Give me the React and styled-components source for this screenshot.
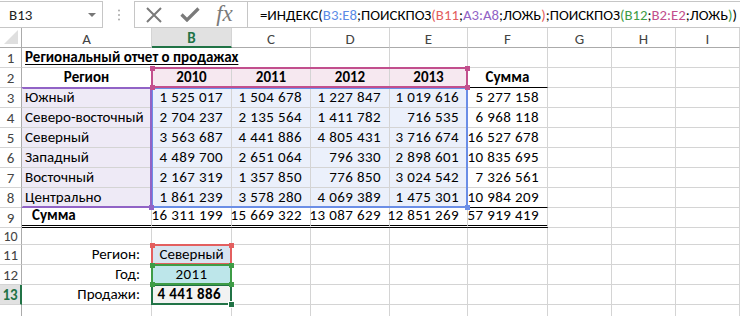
import React from 'react';
import styled, { createGlobalStyle } from 'styled-components';

const FONT = `Carlito, Calibri, "Open Sans", sans-serif`;

const GlobalStyle = createGlobalStyle`
  html, body {
    margin: 0;
    padding: 0;
    background: #fff;
  }
  body {
    width: 740px;
    height: 316px;
    overflow: hidden;
    font-family: ${FONT};
  }
`;

const Window = styled.div`
  display: flex;
  flex-direction: column;
  width: 740px;
  height: 316px;
  overflow: hidden;
`;

const FormulaBar = styled.div`
  display: flex;
  align-items: flex-start;
  height: 36px;
  padding-top: 1px;
  box-sizing: border-box;
`;

const NameBox = styled.div`
  width: 103px;
  height: 27px;
  box-sizing: border-box;
  border: 1px solid #c6c6c6;
  border-left: none;
  display: flex;
  align-items: center;
  justify-content: space-between;
  padding: 0 6px 0 9px;
  font-size: 15px;
  color: #222;
`;

const Arrow = styled.span`
  width: 0;
  height: 0;
  border-left: 4px solid transparent;
  border-right: 4px solid transparent;
  border-top: 4px solid #777;
`;

const Dots = styled.div`
  width: 31px;
  height: 27px;
  display: flex;
  align-items: center;
  justify-content: center;
`;

const FxButtons = styled.div`
  width: 113px;
  height: 27px;
  box-sizing: border-box;
  border: 1px solid #c6c6c6;
  border-right: none;
  display: flex;
  align-items: center;
  justify-content: space-around;
  padding: 0 6px 0 2px;
  color: #777;
`;

const FxLabel = styled.span`
  font-family: "Liberation Serif", serif;
  font-style: italic;
  font-size: 23px;
  color: #7a7a7a;
  line-height: 1;
  margin-top: -2px;
`;

const FormulaInput = styled.div`
  flex: 1;
  height: 27px;
  box-sizing: border-box;
  border: 1px solid #c6c6c6;
  border-right: none;
  display: flex;
  align-items: center;
  padding-left: 12px;
  font-size: 14.8px;
  color: #000;
  white-space: pre;
  overflow: hidden;
`;

const Ref = styled.span`
  color: ${p => p.$color};
`;

const Sheet = styled.div`
  display: grid;
  grid-template-columns: 22px 130px 80px 79px 79px 78px 80px 64px 64px 64px;
  grid-template-rows: 20px repeat(9, 20px) 17px repeat(4, 20px);
  font-size: 15px;
`;

const Corner = styled.div`
  grid-column: 1;
  grid-row: 1;
  border-right: 1px solid #ababab;
  border-bottom: 1px solid #ababab;
  position: relative;
  &::after {
    content: '';
    position: absolute;
    right: 3px;
    bottom: 3px;
    border-left: 14px solid transparent;
    border-bottom: 14px solid #dfdfdf;
  }
`;

const ColHead = styled.div`
  grid-column: ${p => p.$c};
  grid-row: 1;
  box-sizing: border-box;
  display: flex;
  align-items: center;
  justify-content: center;
  border-right: 1px solid #d4d4d4;
  border-bottom: ${p => (p.$active ? '2px solid #217346' : '1px solid #ababab')};
  background: ${p => (p.$active ? '#e1e1e1' : '#fff')};
  color: ${p => (p.$active ? '#217346' : '#444')};
  font-weight: ${p => (p.$active ? 700 : 400)};
  padding-top: 2px;
`;

const RowHead = styled.div`
  grid-column: 1;
  grid-row: ${p => p.$r};
  box-sizing: border-box;
  display: flex;
  align-items: center;
  justify-content: center;
  border-right: ${p => (p.$active ? '2px solid #217346' : '1px solid #ababab')};
  border-bottom: 1px solid #d4d4d4;
  background: ${p => (p.$active ? '#e1e1e1' : '#fff')};
  color: ${p => (p.$active ? '#217346' : '#444')};
  font-weight: ${p => (p.$active ? 700 : 400)};
  font-size: ${p => (p.$small ? '14px' : '15px')};
`;

const Cell = styled.div`
  grid-column: ${p => p.$c} / span ${p => p.$span || 1};
  grid-row: ${p => p.$r};
  box-sizing: border-box;
  display: flex;
  align-items: flex-end;
  justify-content: ${p => (p.$align === 'center' ? 'center' : p.$align === 'right' ? 'flex-end' : 'flex-start')};
  padding: 0 ${p => p.$pr ?? 3}px 1px ${p => p.$pl ?? 3}px;
  line-height: 18px;
  white-space: nowrap;
  border-right: 1px solid #d4d4d4;
  border-bottom: ${p => p.$bottom || '1px solid #d4d4d4'};
  background: ${p => p.$bg || '#fff'};
  font-weight: ${p => (p.$bold ? 700 : 400)};
  letter-spacing: ${p => (p.$num ? '0.4px' : 'normal')};
  color: #000;
`;

const Title = styled.span`
  font-weight: 700;
  text-decoration: underline;
  text-decoration-thickness: 1px;
  text-underline-offset: 2px;
`;

const Range = styled.div`
  grid-column: ${p => p.$c};
  grid-row: ${p => p.$r};
  position: relative;
  margin: -1px 0 0 -1px;
  border: 2px solid ${p => p.$color};
  ${p => p.$noLeft && 'border-left-color: transparent;'}
  pointer-events: none;
`;

const Handle = styled.span`
  position: absolute;
  width: 5px;
  height: 5px;
  background: ${p => p.$color};
  ${p => (p.$y === 't' ? 'top: -3.5px;' : 'bottom: -3.5px;')}
  ${p => (p.$x === 'l' ? 'left: -3.5px;' : 'right: -3.5px;')}
`;

const FillHandle = styled.span`
  position: absolute;
  right: -5px;
  bottom: -5px;
  width: 5px;
  height: 5px;
  background: #217346;
  border: 1px solid #fff;
`;

const COLS = ['A', 'B', 'C', 'D', 'E', 'F', 'G', 'H', 'I'];

const data = [
  ['Южный', '1 525 017', '1 504 678', '1 227 847', '1 019 616', '5 277 158'],
  ['Северо-восточный', '2 704 237', '2 135 564', '1 411 782', '716 535', '6 968 118'],
  ['Северный', '3 563 687', '4 441 886', '4 805 431', '3 716 674', '16 527 678'],
  ['Западный', '4 489 700', '2 651 064', '796 330', '2 898 601', '10 835 695'],
  ['Восточный', '2 167 319', '1 357 850', '776 850', '3 024 542', '7 326 561'],
  ['Центрально', '1 861 239', '3 578 280', '4 069 389', '1 475 301', '10 984 209'],
];

const totals = ['16 311 199', '15 669 322', '13 087 629', '12 851 269', '57 919 419'];

const C = {
  blue: '#6b8ee6',
  purple: '#9163c6',
  pink: '#c24f8d',
  red: '#e35f5f',
  green: '#3e9c46',
  sel: '#217346',
};

const buildCells = () => {
  const out = [];
  const add = (r, c, text = '', props = {}) =>
    out.push(
      <Cell key={`${r}-${c}`} $r={r + 1} $c={c + 2} {...props}>
        {text}
      </Cell>
    );
  const num = { $align: 'right', $pr: 8, $num: true };

  // row 1 - title overflows into B and C
  add(1, 0, <Title>Региональный отчет о продажах</Title>, { $span: 3 });
  for (let c = 3; c < 9; c++) add(1, c);

  // row 2 - headings
  add(2, 0, 'Регион', { $bold: true, $align: 'center' });
  ['2010', '2011', '2012', '2013'].forEach((y, i) =>
    add(2, i + 1, y, { $bold: true, $align: 'center', $bg: '#f6e8f0' })
  );
  add(2, 5, 'Сумма', { $bold: true, $align: 'center', $bottom: '1px solid #000' });
  for (let c = 6; c < 9; c++) add(2, c);

  // rows 3..8
  data.forEach((row, i) => {
    const r = i + 3;
    add(r, 0, row[0], { $bg: '#eeeaf6' });
    for (let c = 1; c < 5; c++) add(r, c, row[c], { ...num, $bg: '#ebf0fb' });
    add(r, 5, row[5], { ...num, $bottom: r === 8 ? '1px solid #000' : undefined });
    for (let c = 6; c < 9; c++) add(r, c);
  });

  // row 9 - totals
  const dbl = '3px double #000';
  add(9, 0, 'Сумма', { $bold: true, $pl: 10, $bottom: dbl });
  totals.forEach((t, i) => add(9, i + 1, t, { ...num, $bottom: dbl }));
  for (let c = 6; c < 9; c++) add(9, c);

  for (let c = 0; c < 9; c++) add(10, c);

  // lookup block
  add(11, 0, 'Регион:', { $align: 'right', $pr: 11 });
  add(11, 1, 'Северный', { $align: 'center', $bg: '#d7e4f0' });
  add(12, 0, 'Год:', { $align: 'right', $pr: 11 });
  add(12, 1, '2011', { $align: 'center', $bg: '#bde6ea', $num: true });
  add(13, 0, 'Продажи:', { $align: 'right', $pr: 11 });
  add(13, 1, '4 441 886', { ...num, $pr: 10, $bold: true, $bg: '#f2f2f2' });
  for (let r = 11; r < 14; r++) for (let c = 2; c < 9; c++) add(r, c);
  for (let c = 0; c < 9; c++) add(14, c);

  return out;
};

const corners = list => list.map(k => ({ y: k[0], x: k[1] }));

const ranges = [
  { key: 'b3e8', c: '3 / 7', r: '4 / 10', color: C.blue, handles: corners(['br']) },
  { key: 'a3a8', c: '2 / 3', r: '4 / 10', color: C.purple, noLeft: true, handles: corners(['br']) },
  { key: 'b2e2', c: '3 / 7', r: '3 / 4', color: C.pink, handles: corners(['tl', 'tr', 'bl', 'br']) },
  { key: 'b11', c: '3 / 4', r: '12 / 13', color: C.red, handles: corners(['tl', 'tr']) },
  { key: 'b13', c: '3 / 4', r: '14 / 15', color: C.sel, fill: true, handles: [] },
  { key: 'b12', c: '3 / 4', r: '13 / 14', color: C.green, handles: corners(['tl', 'tr', 'bl', 'br']) },
];

const XIcon = () => (
  <svg width="18" height="16" viewBox="0 0 18 16">
    <path d="M2 1 L16 15 M16 1 L2 15" stroke="#7a7a7a" strokeWidth="2" fill="none" />
  </svg>
);

const CheckIcon = () => (
  <svg width="20" height="15" viewBox="0 0 20 15">
    <path d="M1.5 7.5 L7 13 L18.5 1.5" stroke="#7a7a7a" strokeWidth="3.2" fill="none" />
  </svg>
);

const DotsIcon = () => (
  <svg width="4" height="12" viewBox="0 0 4 12">
    <circle cx="2" cy="1.5" r="1" fill="#aaa" />
    <circle cx="2" cy="6" r="1" fill="#aaa" />
    <circle cx="2" cy="10.5" r="1" fill="#aaa" />
  </svg>
);

const App = () => (
  <Window>
    <GlobalStyle />
    <FormulaBar>
      <NameBox>
        B13
        <Arrow />
      </NameBox>
      <Dots>
        <DotsIcon />
      </Dots>
      <FxButtons>
        <XIcon />
        <CheckIcon />
        <FxLabel>fx</FxLabel>
      </FxButtons>
      <FormulaInput>
        =ИНДЕКС(<Ref $color="#5b8be6">B3:E8</Ref>;ПОИСКПОЗ<Ref $color={C.red}>(</Ref>
        <Ref $color={C.red}>B11</Ref>;<Ref $color={C.purple}>A3:A8</Ref>;ЛОЖЬ
        <Ref $color={C.red}>)</Ref>;ПОИСКПОЗ<Ref $color={C.green}>(</Ref>
        <Ref $color={C.green}>B12</Ref>;<Ref $color={C.pink}>B2:E2</Ref>;ЛОЖЬ
        <Ref $color={C.green}>)</Ref>)
      </FormulaInput>
    </FormulaBar>

    <Sheet>
      <Corner />
      {COLS.map((l, i) => (
        <ColHead key={l} $c={i + 2} $active={l === 'B'}>
          {l}
        </ColHead>
      ))}
      {Array.from({ length: 14 }, (_, i) => (
        <RowHead key={i} $r={i + 2} $active={i + 1 === 13} $small={i + 1 === 10}>
          {i < 13 ? i + 1 : ''}
        </RowHead>
      ))}
      {buildCells()}
      {ranges.map(rg => (
        <Range key={rg.key} $c={rg.c} $r={rg.r} $color={rg.color} $noLeft={rg.noLeft}>
          {rg.handles.map(h => (
            <Handle key={h.y + h.x} $y={h.y} $x={h.x} $color={rg.color} />
          ))}
          {rg.fill && <FillHandle />}
        </Range>
      ))}
    </Sheet>
  </Window>
);

export default App;
